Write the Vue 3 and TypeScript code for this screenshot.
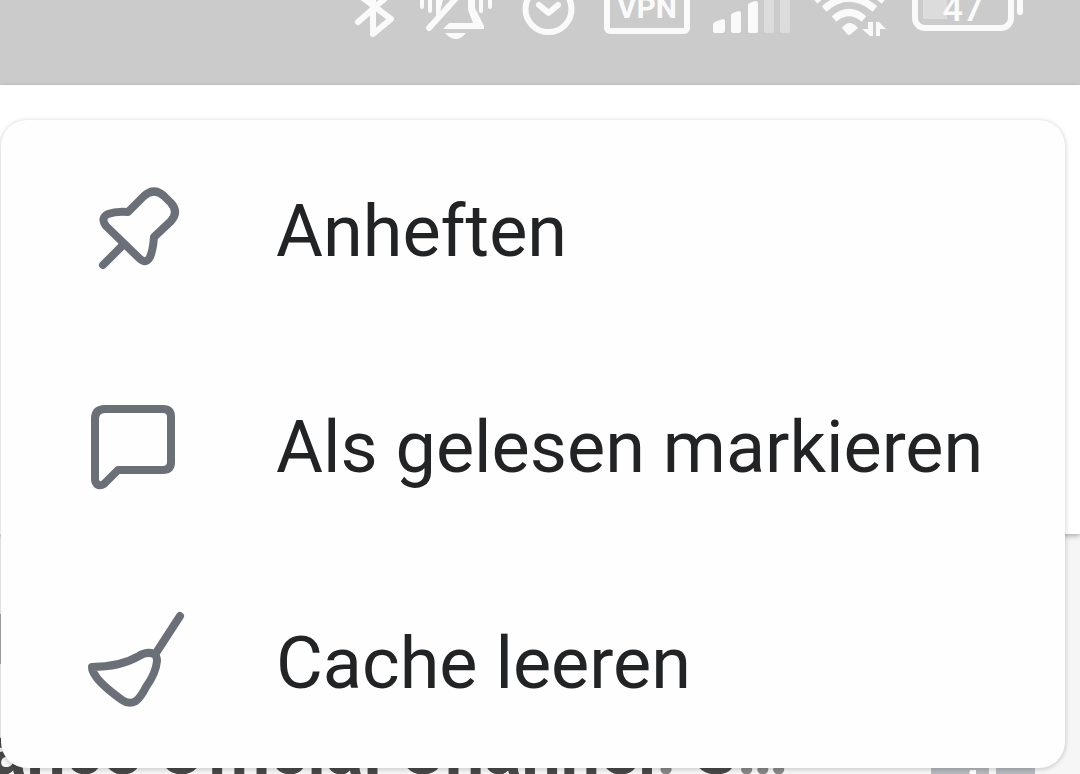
<script setup lang="ts">
type IconName = 'pin' | 'chat' | 'broom'

interface MenuEntry {
  icon: IconName
  label: string
}

const entries: MenuEntry[] = [
  { icon: 'pin', label: 'Anheften' },
  { icon: 'chat', label: 'Als gelesen markieren' },
  { icon: 'broom', label: 'Cache leeren' },
]

const paths: Record<IconName, string[]> = {
  pin: [
    'M33 98 L54 77',
    'M58 45 L74 29 Q84 20 94 29 L101 36 Q109 45 101 54 L84 70 Q83 83 80 90 Q76 98 69 91 L36 59 Q30 51 38 47 Q46 44 58 45 Z',
  ],
  chat: [
    'M35 26 H93 Q101 26 101 34 V79 Q101 87 93 87 H48 L34 101 Q31 103 28 102 Q25 100 25 96 V36 Q25 26 35 26 Z',
  ],
  broom: [
    'M110 17 L86 54',
    'M22 68 Q50 68 69 57 Q77 52 84 55 Q87 57 87 62 Q86 74 76 88 Q71 98 66 102 Q59 106 52 101 Q30 85 25 76 Q22 72 22 68 Z',
  ],
}
</script>

<template>
  <div class="screen">
    <header class="status">
      <svg class="glyph" width="41" height="42" viewBox="355 0 41 42" aria-label="Bluetooth">
        <path d="M359 -5 L391 19 L373 34 V-20 L391 -7 L358 22" class="line" />
      </svg>
      <svg class="glyph" width="77" height="42" viewBox="420 0 77 42" aria-label="Vibrate">
        <path d="M422 -5 V7 M430 -5 V11 M481 -5 V11 M490 -5 V7" class="line thin" />
        <path d="M429 28 L459 -5" class="line" />
        <path d="M436 0 H443 L440 12 L436 16 Z M443 29 L449 23 H473 L468 10 V-4 H475 V8 L484 26 V29 Z M445 33 H466 Q456 45 445 33 Z" class="fill" />
      </svg>
      <svg class="glyph" width="59" height="42" viewBox="521 0 59 42" aria-label="Alarm">
        <circle cx="548.5" cy="9" r="23" class="line" />
        <path d="M539 5 L548.5 13 L558 5" class="line" />
      </svg>
      <svg class="glyph" width="84" height="42" viewBox="604 0 84 42">
        <rect x="607" y="-20" width="80" height="51" rx="3" class="line" />
        <text x="647" y="18" text-anchor="middle" class="vpn">VPN</text>
      </svg>
      <svg class="glyph" width="77" height="42" viewBox="712 0 77 42" aria-label="Signal">
        <path d="M713 24 Q713 22 723 19 Q725 19 725 22 V30 Q725 33 722 33 H715 Q713 33 713 31 Z M731 15 Q731 13 739 11 Q741 11 741 14 V31 Q741 33 739 33 H733 Q731 33 731 31 Z M748 5 Q748 3 755 1 Q758 1 758 4 V31 Q758 33 756 33 H750 Q748 33 748 31 Z" class="fill" />
        <path d="M764 0 H774 V31 Q774 33 772 33 H766 Q764 33 764 31 Z M780 0 H790 V31 Q790 33 788 33 H782 Q780 33 780 31 Z" class="faint" />
      </svg>
      <svg class="glyph" width="74" height="42" viewBox="813 0 74 42" aria-label="WLAN">
        <path d="M834 19 Q849 6 864 19 M824 9 Q849 -13 875 9 M815 1 Q849 -29 884 1" class="wave" />
        <path d="M842 28 Q849 18 858 28 L851 34 Q849 36 847 34 Z M868 22 H873 V36 H870 L862 29 H868 Z M876 36 V22 H879 L886 29 H880 V36 Z" class="fill" />
      </svg>
      <svg class="glyph" width="112" height="42" viewBox="911 0 112 42">
        <rect x="923" y="-10" width="24" height="29" class="faint" />
        <rect x="915" y="-30" width="96" height="58" rx="10" class="line" />
        <text x="963" y="21" text-anchor="middle" class="level">47</text>
        <path d="M1017 -5 H1023 V12 Q1023 15 1020 15 Q1017 15 1017 12 Z" class="fill" />
      </svg>
    </header>

    <main class="page">
      <section class="card"></section>
      <section class="chat">
        <span class="edge"></span>
        <p class="title">ance Official Channel<span class="soft">:</span> S<span class="soft">…</span></p>
        <svg class="badge" width="104" height="60" viewBox="0 0 104 60" aria-hidden="true">
          <path d="M0 0 H58 V60 H0 Z M65 0 H104 V60 H65 Z" fill="#b5b9bd" />
          <path d="M39 36 H45 V60 H34 Z" fill="#fff" />
        </svg>
      </section>

      <nav class="menu">
        <button v-for="entry in entries" :key="entry.icon" type="button" class="item">
          <svg class="icon" width="130" height="130" viewBox="0 0 130 130" aria-hidden="true">
            <path v-for="d in paths[entry.icon]" :key="d" :d="d" />
          </svg>
          <span>{{ entry.label }}</span>
        </button>
      </nav>
    </main>
  </div>
</template>

<style>
body {
  margin: 0;
}
</style>

<style scoped>
.screen {
  display: flex;
  flex-direction: column;
  height: 100vh;
  overflow: hidden;
  background: #f6f6f6;
  font-family: Roboto, 'Noto Sans', sans-serif;
}

.status {
  display: flex;
  flex: none;
  justify-content: flex-end;
  gap: 24px;
  height: 85px;
  padding-right: 57px;
  background: #cbcbcb;
}

.glyph {
  flex: none;
  overflow: visible;
}

.line {
  fill: none;
  stroke: #fafafa;
  stroke-width: 6;
  stroke-linecap: round;
  stroke-linejoin: round;
}

.thin {
  stroke-width: 4;
}

.wave {
  fill: none;
  stroke: #fafafa;
  stroke-width: 7;
}

.fill {
  fill: #fafafa;
}

.faint {
  fill: #dcdcdc;
}

.vpn,
.level {
  fill: #fafafa;
  font-size: 30px;
  font-weight: 700;
}

.level {
  font-size: 36px;
  font-weight: 500;
}

.page {
  position: relative;
  flex: 1;
}

.card {
  height: 449px;
  background: #fff;
  box-shadow: 0 2px 5px rgba(0, 0, 0, 0.3);
}

.chat {
  display: flex;
  align-items: flex-start;
  justify-content: space-between;
  padding: 80px 45px 0 0;
}

.edge {
  flex: none;
  width: 1px;
  height: 50px;
  background: #aaa;
}

.title {
  flex: 1;
  margin: 94px 0 0 -12px;
  color: #484848;
  font-size: 70px;
  font-weight: 700;
  line-height: 84px;
  white-space: nowrap;
}

.soft {
  color: #888;
}

.badge {
  flex: none;
  margin-top: 120px;
}

.menu {
  position: absolute;
  top: 35px;
  right: 15px;
  left: 1px;
  display: flex;
  flex-direction: column;
  border-radius: 26px;
  background: #fefefe;
  box-shadow: 0 1px 4px 1px rgba(0, 0, 0, 0.16);
}

.item {
  display: flex;
  align-items: center;
  gap: 76px;
  height: 216px;
  padding: 8px 0 0 69px;
  border: 0;
  background: none;
  color: #222325;
  font: 400 72px/84px Roboto, 'Noto Sans', sans-serif;
  text-align: left;
  white-space: nowrap;
}

.icon {
  flex: none;
}

.icon path {
  fill: none;
  stroke: #6b6f77;
  stroke-width: 8;
  stroke-linecap: round;
  stroke-linejoin: round;
}
</style>
